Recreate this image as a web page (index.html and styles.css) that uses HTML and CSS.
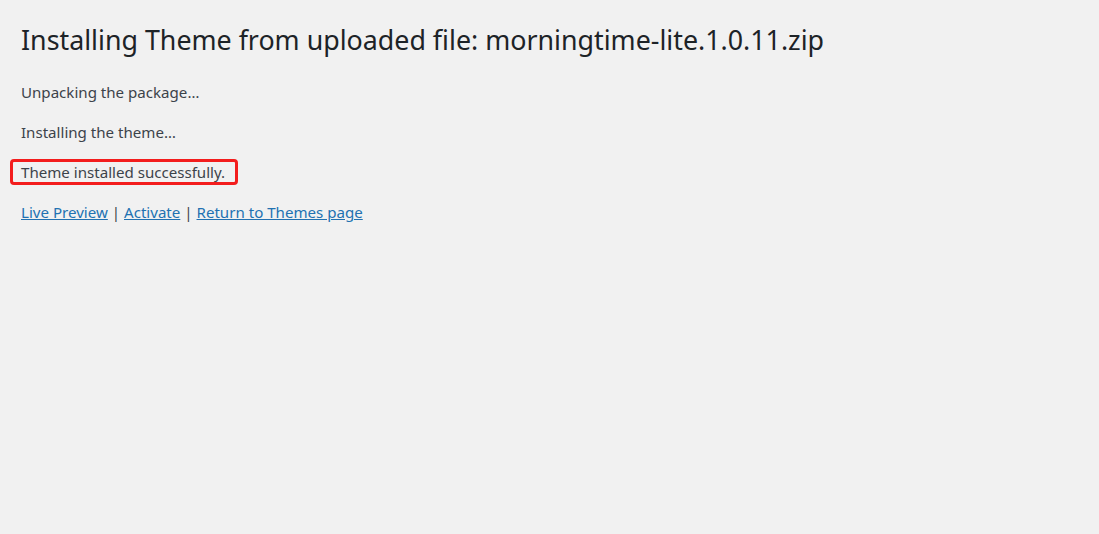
FILE: index.html
```html
<!DOCTYPE html>
<html lang="en">
<head>
    <meta charset="UTF-8">
    <meta name="viewport" content="width=device-width, initial-scale=1.0">
    <title>Update Theme</title>
    <link rel="stylesheet" href="styles.css">
</head>
<body>
    <div class="wrap">
        <h1>Installing Theme from uploaded file: morningtime-lite.1.0.11.zip</h1>
        <p>Unpacking the package&hellip;</p>
        <p>Installing the theme&hellip;</p>
        <p><span class="marked">Theme installed successfully.</span></p>
        <p class="actions">
            <a href="#">Live Preview</a> | <a href="#">Activate</a> | <a href="#">Return to Themes page</a>
        </p>
    </div>
</body>
</html>
```

FILE: styles.css
```css
body {
    margin: 0;
    background-color: #f1f1f1;
    color: #3c434a;
    font-family: "Noto Sans", "Open Sans", sans-serif;
}

.wrap {
    padding: 20px 21px;
}

h1 {
    margin: 0 0 21px;
    font-size: 26.8px;
    font-weight: 400;
    line-height: 40px;
    color: #1d2327;
}

p {
    margin: 0 0 18px;
    font-size: 15.1px;
    line-height: 22px;
}

.marked {
    display: inline-block;
    margin: -3px 0 -3px -11px;
    padding: 0 10px 0 8px;
    line-height: 20px;
    border: 3px solid #f31d1d;
    border-radius: 4px;
}

.actions a {
    color: #2271b1;
}
```
